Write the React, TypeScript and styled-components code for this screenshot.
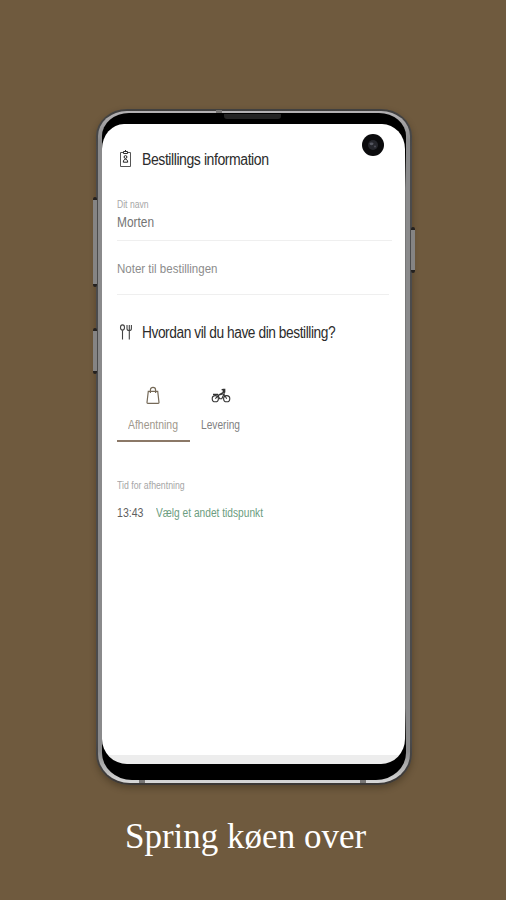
import React from 'react';
import styled, { createGlobalStyle } from 'styled-components';

const GlobalStyle = createGlobalStyle`
  * { box-sizing: border-box; }
  body { margin: 0; background: #6f5a3e; }
`;

const Page = styled.main`
  width: 506px;
  height: 900px;
  padding: 109px 94px 0 96px;
  overflow: hidden;
  background: #6f5a3e;
  font-family: 'Liberation Sans', Arial, sans-serif;
`;

const Frame = styled.div`
  position: relative;
  width: 316px;
  height: 676px;
  padding: 2px;
  border-radius: 31px 31px 34px 34px / 27px 27px 31px 31px;
  background: linear-gradient(180deg, #41403f 0, #4b4b4c 40px, #4b4b4c 630px, #3c3835 100%);
  box-shadow: 0 3px 6px rgba(35, 25, 12, 0.35);
`;

const Metal = styled.div`
  height: 100%;
  padding: 2px 4px 3px;
  border-radius: 29px 29px 32px 32px / 25px 25px 29px 29px;
  background: linear-gradient(180deg, #b5b3b5 0, #8a8a8b 30px, #8a8a8b 640px, #d8d8d8 100%);
`;

const Bezel = styled.div`
  height: 100%;
  padding: 11px 1px 16px 0;
  border-radius: 27px 27px 30px 30px / 23px 23px 27px 27px;
  background: linear-gradient(180deg, #000 0, #000 40px, #777 75px, #777 595px, #000 632px);
`;

const Screen = styled.section`
  height: 640px;
  padding: 24px 14px 0 15px;
  border-radius: 22px 23px 24px 25px / 25px 25px 25px 25px;
  background: linear-gradient(180deg, #fff 631px, #ededed 631px);
`;

const SideKey = styled.i<{ $side: 'left' | 'right'; $top: number; $height: number }>`
  position: absolute;
  ${(p) => p.$side}: -3px;
  top: ${(p) => p.$top}px;
  width: 4px;
  height: ${(p) => p.$height}px;
  border: solid #24211f;
  border-width: 3px 0;
  border-radius: 2px;
  background: #858484;
`;

const FrameMark = styled.i<{ $x: number; $y: number }>`
  position: absolute;
  left: ${(p) => p.$x}px;
  top: ${(p) => p.$y}px;
  width: 6px;
  height: 3px;
  background: #777574;
`;

const Speaker = styled.i`
  position: absolute;
  left: 128px;
  top: 5px;
  width: 57px;
  height: 5px;
  border-radius: 0 0 3px 3px;
  background: #242424;
`;

const Camera = styled.svg`
  position: absolute;
  left: 266px;
  top: 25px;
`;

const Label = styled.span<{ $size: number; $stretch: number; $color: string; $spacing?: number; $line?: number }>`
  display: block;
  width: max-content;
  white-space: nowrap;
  font-size: ${(p) => p.$size}px;
  line-height: ${(p) => p.$line ?? 18}px;
  letter-spacing: ${(p) => p.$spacing ?? 0}px;
  color: ${(p) => p.$color};
  transform: scaleX(${(p) => p.$stretch});
  transform-origin: left center;
`;

const Heading = styled.header`
  display: flex;
  align-items: center;
  gap: 6.5px;
  height: 24px;
`;

const Fields = styled.div`
  margin: 24px 0 26px;
`;

const Field = styled.div<{ $height: number; $rule: number; $pad: number }>`
  width: ${(p) => p.$rule}px;
  height: ${(p) => p.$height}px;
  padding-top: ${(p) => p.$pad}px;
  border-bottom: 1px solid #efefef;
`;

const Tabs = styled.nav`
  display: flex;
  margin-top: 39px;
`;

const Tab = styled.div<{ $active?: boolean; $width: number; $pad: number }>`
  width: ${(p) => p.$width}px;
  height: 58px;
  border-bottom: 2px solid ${(p) => (p.$active ? '#8b7867' : 'transparent')};
  padding: 2px 0 0 ${(p) => p.$pad}px;
`;

const TabIcon = styled.div<{ $indent: number }>`
  height: 30px;
  padding-left: ${(p) => p.$indent}px;
`;

const Pickup = styled.div`
  margin-top: 34px;
`;

const TimeRow = styled.div`
  display: grid;
  grid-template-columns: 39px 1fr;
  margin-top: 10px;
`;

const Caption = styled.h1`
  margin: 32px 0 0 29px;
  font: 400 35px/40px 'Liberation Serif', 'Times New Roman', serif;
  color: #fff;
  white-space: nowrap;
`;

const BadgeIcon = () => (
  <svg width="18" height="22" viewBox="0 0 18 22" fill="none" stroke="#555" strokeWidth="1">
    <path d="M6.5 3.5h-3v14h10v-14h-3" />
    <path d="M6.5 2.5h4v2h-4zM8.5 1v1.5" stroke="#333" />
    <circle cx="8.5" cy="8" r="1.4" stroke="#222" />
    <path d="M6.3 13.2c0-4 4.4-4 4.4 0z" stroke="#222" />
  </svg>
);

const CutleryIcon = () => (
  <svg width="18" height="20" viewBox="0 0 18 20" fill="none" stroke="#444" strokeWidth="1.1">
    <ellipse cx="5.5" cy="4.5" rx="2" ry="2.6" />
    <path d="M5.5 7.2v9.3M10 2v3.4c0 1.5.9 2.1 2.2 2.1s2.2-.6 2.2-2.1V2M12.3 2v14.5" />
  </svg>
);

const BagIcon = () => (
  <svg width="16" height="20" viewBox="0 0 16 20" fill="none" stroke="#756957" strokeWidth="1.2">
    <path d="M3.3 5.3h9.4l1.3 11.2q0 .8-.8.8H2.8q-.8 0-.8-.8zM5.4 7V4C5.4.4 10.6.4 10.6 4V7" />
  </svg>
);

const BikeIcon = () => (
  <svg width="20" height="20" viewBox="0 0 20 20" fill="none" stroke="#333" strokeWidth="1.1">
    <circle cx="4.3" cy="12.7" r="3.1" />
    <circle cx="15.7" cy="12.7" r="3.1" />
    <path d="M4.3 12.7 8 9l4.7-1.2 3 4.9M2 8.4h4.6L8.6 12.7h2.2L13 8M10.6 3.6h2.6l.2 4M8 8.8l4.6-2.6" />
    <path d="M12.2 3.3h1.6v2.6h-1.6z" fill="#222" />
  </svg>
);

export default function App() {
  return (
    <>
      <GlobalStyle />
      <Page>
        <Frame>
          <SideKey $side="left" $top={88} $height={90} />
          <SideKey $side="left" $top={219} $height={46} />
          <SideKey $side="right" $top={118} $height={46} />
          <Metal>
            <Bezel>
              <Screen>
                <Heading>
                  <BadgeIcon />
                  <Label $size={16} $stretch={0.878} $spacing={-0.5} $color="#2c2c2c">Bestillings information</Label>
                </Heading>
                <Fields>
                  <Field $height={45} $rule={275} $pad={0}>
                    <Label $size={10} $stretch={0.86} $color="#a6a6a6">Dit navn</Label>
                    <Label $size={14} $stretch={0.85} $line={16} $color="#747474">Morten</Label>
                  </Field>
                  <Field $height={54} $rule={272} $pad={19}>
                    <Label $size={13.5} $stretch={0.853} $color="#8c8c8c">Noter til bestillingen</Label>
                  </Field>
                </Fields>
                <Heading>
                  <CutleryIcon />
                  <Label $size={16} $stretch={0.857} $spacing={-0.5} $color="#2c2c2c">Hvordan vil du have din bestilling?</Label>
                </Heading>
                <Tabs>
                  <Tab $active $width={73} $pad={11}>
                    <TabIcon $indent={17}><BagIcon /></TabIcon>
                    <Label $size={12.5} $stretch={0.836} $color="#a0988c">Afhentning</Label>
                  </Tab>
                  <Tab $width={66} $pad={11}>
                    <TabIcon $indent={10}><BikeIcon /></TabIcon>
                    <Label $size={12.5} $stretch={0.814} $color="#818181">Levering</Label>
                  </Tab>
                </Tabs>
                <Pickup>
                  <Label $size={10.5} $stretch={0.832} $color="#a6a6a6">Tid for afhentning</Label>
                  <TimeRow>
                    <Label $size={13} $stretch={0.815} $color="#606060">13:43</Label>
                    <Label $size={12} $stretch={0.849} $color="#6b9d80">Vælg et andet tidspunkt</Label>
                  </TimeRow>
                </Pickup>
              </Screen>
            </Bezel>
          </Metal>
          <Speaker />
          <FrameMark $x={120} $y={1} />
          <FrameMark $x={43} $y={671} />
          <FrameMark $x={264} $y={671} />
          <Camera width="22" height="22" viewBox="0 0 22 22">
            <circle cx="11" cy="11" r="11" fill="#0b0b0d" />
            <circle cx="11" cy="11" r="5" fill="#25262c" />
            <ellipse cx="9.5" cy="9.8" rx="2" ry="1.4" fill="#555761" />
            <circle cx="13" cy="12.5" r="1.1" fill="#484a54" />
          </Camera>
        </Frame>
        <Caption>Spring køen over</Caption>
      </Page>
    </>
  );
}
